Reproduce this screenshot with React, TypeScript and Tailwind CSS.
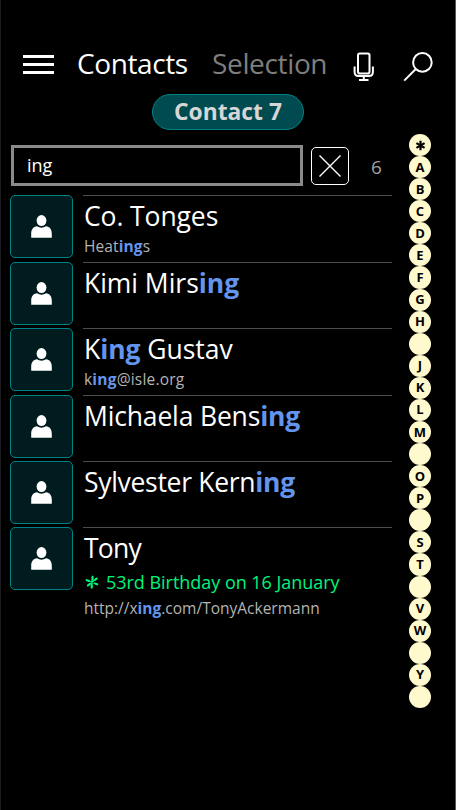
import type { ReactNode } from 'react';

interface Contact {
  name: string;
  birthday?: string;
  detail?: string;
  rowClass: string;
  nameClass: string;
  detailClass?: string;
}

const QUERY = 'ing';

const CONTACTS: Contact[] = [
  { name: 'Co. Tonges', detail: 'Heatings', rowClass: 'h-[67px]', nameClass: 'tracking-[-0.1px]', detailClass: 'mt-[2px] text-[15.5px] tracking-[0.1px]' },
  { name: 'Kimi Mirsing', rowClass: 'h-[66px]', nameClass: 'tracking-[-0.03px]' },
  { name: 'King Gustav', detail: 'king@isle.org', rowClass: 'h-[67px]', nameClass: 'tracking-[-0.05px]', detailClass: 'mt-[2px] text-[15.5px] tracking-[0.2px]' },
  { name: 'Michaela Bensing', rowClass: 'h-[66px]', nameClass: 'tracking-[-0.16px]' },
  { name: 'Sylvester Kerning', rowClass: 'h-[66px]', nameClass: 'tracking-[-0.3px]' },
  {
    name: 'Tony',
    birthday: '53rd Birthday on 16 January',
    detail: 'http://xing.com/TonyAckermann',
    rowClass: 'h-[96px]',
    nameClass: 'tracking-[-0.8px]',
    detailClass: 'mt-[5px] text-[15.5px] tracking-[0px]',
  },
];

// Letters without any contact stay empty
const INDEX = [
  '*', 'A', 'B', 'C', 'D', 'E', 'F', 'G', 'H', '', 'J', 'K', 'L',
  'M', '', 'O', 'P', '', 'S', 'T', '', 'V', 'W', '', 'Y', '',
];

function highlight(text: string): ReactNode {
  const at = text.toLowerCase().indexOf(QUERY);
  if (at < 0) return text;
  return (
    <>
      {text.slice(0, at)}
      <span className="font-bold text-[#6495ed]">{text.slice(at, at + QUERY.length)}</span>
      {text.slice(at + QUERY.length)}
    </>
  );
}

function Asterisk({ className }: { className: string }) {
  return (
    <svg viewBox="0 0 14 14" className={className} fill="none" stroke="currentColor">
      <path d="M7 1V13M1.8 4L12.2 10M1.8 10L12.2 4" />
    </svg>
  );
}

// Blossom in front of a birthday
function Blossom({ className }: { className: string }) {
  return (
    <svg viewBox="0 0 14 14" className={className} fill="none" stroke="currentColor" strokeLinecap="round">
      <path d="M7.6 1.2L6.6 12.8M1.2 5L12.6 9.4M2.6 10.8L12 3.2" strokeWidth="1.3" />
      <path d="M7.5 2V4.4M6.7 10V12.4M1.8 5.2L4 6M10 8.4L12 9.3M3 10.4L4.6 9.2M9.8 5L11.4 3.7" strokeWidth="2.1" />
    </svg>
  );
}

function Avatar() {
  return (
    <div className="flex h-[63px] w-[63px] shrink-0 items-center justify-center rounded-[5px] border border-[#008387] bg-[#001c1e] pb-px">
      <svg viewBox="0 0 21 23" className="h-[23px] w-[21px]" fill="white">
        <ellipse cx="10.5" cy="5.6" rx="4.9" ry="5.5" />
        <path d="M.2 22.8V19C.2 14 2.4 11.7 6 11.2C8.5 13.1 12.5 13.1 15 11.2C18.6 11.7 20.8 14 20.8 19V22.8Z" />
      </svg>
    </div>
  );
}

function ContactRow({ contact }: { contact: Contact }) {
  return (
    <div className={`flex ${contact.rowClass}`}>
      <Avatar />
      <div className="ml-[10px] flex-1 border-t border-[#4c4c4c] pl-px whitespace-nowrap">
        <div className={`mt-[2px] h-[34px] text-[26.5px] leading-[37px] ${contact.nameClass}`}>{highlight(contact.name)}</div>
        {contact.birthday && (
          <div className="flex h-[27px] items-center pt-[9px] text-[18px] leading-[26px] tracking-[-0.03px] text-[#00f47a]">
            <Blossom className="mr-[7px] ml-px h-[14px] w-[14px]" />
            <span>{contact.birthday}</span>
          </div>
        )}
        {contact.detail && (
          <div className={`leading-[24px] text-[#b4b4b4] ${contact.detailClass}`}>
            {highlight(contact.detail)}
          </div>
        )}
      </div>
    </div>
  );
}

export default function App() {
  return (
    <div className="flex h-[810px] w-[456px] flex-col overflow-hidden border-r border-l border-r-[#555] border-l-[#1c1c1c] bg-black font-['Open_Sans','Noto_Sans',sans-serif] text-white">
      {/* Title bar */}
      <header className="flex h-[94px] shrink-0 items-start pt-[45px] pl-[22px] leading-[36px]">
        <div className="mt-[10px] flex w-[31px] flex-col gap-[5px]">
          <div className="h-[3px] bg-white" />
          <div className="h-[3px] bg-white" />
          <div className="h-[3px] bg-white" />
        </div>
        <span className="ml-[23px] w-[135px] text-[28px] tracking-[-0.4px]">Contacts</span>
        <span className="w-[141px] text-[28px] tracking-[-0.35px] text-[#7e7e7e]">Selection</span>
        <svg viewBox="0 0 22 29" className="mt-[7px] h-[29px] w-[22px]" fill="none" stroke="white" strokeWidth="2">
          <rect x="5" y="1.5" width="11.5" height="20" rx="1.8" />
          <path d="M1.6 14.5V20C1.6 22.6 3 24 5.5 24H16C18.5 24 19.9 22.6 19.9 20V14.5M10.8 24V28M6 28H15.5" />
        </svg>
        <svg viewBox="0 0 30 30" className="mt-[7px] ml-[28px] h-[30px] w-[30px]" fill="none" stroke="white" strokeWidth="2">
          <circle cx="19.4" cy="10.4" r="9.3" />
          <path d="M12.8 17L1.2 28.6" />
        </svg>
      </header>

      <div className="flex min-h-0 flex-1">
        <main className="w-[391px] shrink-0 pl-[9px]">
          <div className="ml-[142px] flex h-[36px] w-[152px] items-center justify-center rounded-full border border-[#008387] bg-[#004b4f] pt-px text-[22.8px] font-bold text-[#d6d6d6]">
            Contact 7
          </div>

          {/* Search field */}
          <div className="mt-[15px] flex h-[50px] items-start">
            <div className="ml-px flex h-[41px] w-[292px] items-center border-[3px] border-[#8a8a8a] pl-[13px] text-[18px]">
              {QUERY}
            </div>
            <div className="mt-[2px] ml-[8px] flex h-[38px] w-[38px] items-center justify-center rounded-[5px] border border-white">
              <svg viewBox="0 0 24 24" className="h-[24px] w-[24px]" stroke="white" strokeWidth="1.4">
                <path d="M1.5 1.5L22.5 22.5M22.5 1.5L1.5 22.5" />
              </svg>
            </div>
            <span className="mt-[9px] ml-[22px] text-[19px] leading-[26px] text-[#a0a0a0]">6</span>
          </div>

          {CONTACTS.map(c => <ContactRow key={c.name} contact={c} />)}
        </main>

        {/* Alphabet jump list */}
        <nav className="mt-[40px] ml-[17px] flex h-[574px] w-[22px] flex-col">
          {INDEX.map((letter, i) => (
            <div
              key={i}
              className="flex min-h-0 w-[22px] flex-1 items-center justify-center rounded-[50%] bg-[#fffacd] text-[13px] leading-none font-bold text-black"
            >
              {letter === '*' ? <Asterisk className="h-[11px] w-[11px] stroke-[2.8]" /> : letter}
            </div>
          ))}
        </nav>
      </div>
    </div>
  );
}
